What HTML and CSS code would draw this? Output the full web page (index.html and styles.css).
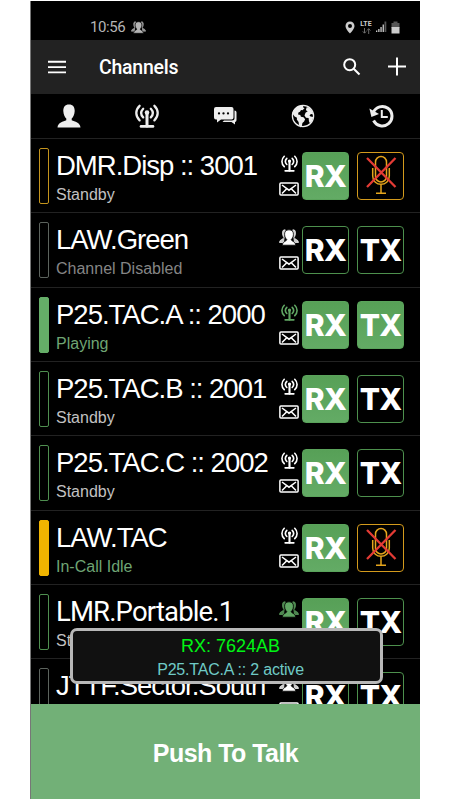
FILE: index.html
```html
<!DOCTYPE html>
<html lang="en">
<head>
<meta charset="utf-8">
<title>Channels</title>
<link rel="stylesheet" href="styles.css">
</head>
<body>
<svg class="sprite" aria-hidden="true">
  <symbol id="tower" viewBox="0 0 24 24">
    <g fill="none" stroke="currentColor" stroke-width="2.300" stroke-linecap="round">
      <path d="M4.600 1.800C.2 6 .2 12.200 4.600 16.400M8.200 4.800C5.600 7.600 5.600 10.800 8.200 13.400M19.400 1.800c4.400 4.200 4.400 10.400 0 14.600M15.800 4.800c2.600 2.800 2.600 6 0 8.600"/>
      <path d="M12 9v13" stroke-width="3"/><path d="M6 22.400h12" stroke-width="2.600"/>
    </g>
    <circle cx="12" cy="8.500" r="2.300" fill="currentColor"/>
  </symbol>
  <symbol id="mail" viewBox="0 0 20 14">
    <g fill="none" stroke="currentColor"><rect x=".9" y=".9" width="18.200" height="12.200" rx="1" stroke-width="1.500"/><path d="M3 3l7 5.200L17 3M3 11.500l4.500-4.600M17 11.500l-4.500-4.600" stroke-width="1.500"/></g>
  </symbol>
  <symbol id="group" viewBox="0 0 20 17">
    <path d="M6.500 1C4 .2 3.200 2.500 3.600 5c.2 2 .9 2.800 1.300 3.500C4.800 10.500.6 10 .5 13.500H5M13.500 1c2.500-.8 3.300 1.500 2.900 4-.2 2-.9 2.800-1.300 3.500.1 2 4.300 1.500 4.400 5H15" fill="currentColor" fill-opacity=".8" stroke="currentColor" stroke-width=".7"/>
    <path class="cutout" d="M10 .8c3.300 0 4.700 2.200 4.400 5-.2 2.400-1.100 3.600-2.200 4.800 0 1.700 4.300 1.700 4.500 5.600H3.300c.2-3.900 4.500-3.900 4.500-5.600C6.700 9.400 5.800 8.200 5.600 5.800 5.300 3 6.700.8 10 .8z"/>
  </symbol>
  <symbol id="mic" viewBox="0 0 32 40">
    <g fill="none" stroke="#e5a51c" stroke-width="1.500"><rect x="10.500" y="1.500" width="11" height="25.500" rx="5.500"/><path d="M7.700 13v8c0 11 16.600 11 16.600 0v-8M16 29.500v8.500M11 38.300h10"/></g>
    <path d="M2 3l28.500 29M30.500 3L2 32" stroke="#e33b35" stroke-width="2.300"/>
  </symbol>
</svg>
<main class="phone">
  <header class="status">
    <span class="clock">10:56</span>
    <svg class="status-group"><use href="#group"/></svg>
    <div class="status-right">
      <svg width="10" height="13" viewBox="0 0 10 13"><path fill="#ccc" fill-rule="evenodd" d="M5 .5C2.300.5.500 2.500.500 5c0 3 4.500 7.500 4.500 7.500S9.500 8 9.500 5C9.500 2.500 7.700.5 5 .5zM5 3a2 2 0 1 1 0 4 2 2 0 0 1 0-4z"/></svg>
      <div class="network"><span class="lte">LTE</span><svg width="9" height="6" viewBox="0 0 9 6"><path d="M2.500 0v5M.8 3.400l1.700 1.800 1.700-1.800M6.700 6V.8M5 2.500L6.700.7l1.700 1.800" stroke="#777" fill="none" stroke-width=".9"/></svg></div>
      <svg class="signal" width="11" height="12" viewBox="0 0 11 12"><path fill="#ccc" d="M0 9.500h1.300V11H0zM2.200 8h1.300v3H2.200zM4.400 6h1.300v5H4.400zM6.600 3.500h1.300V11H6.600z"/><path fill="#555" d="M8.500.5h1.800V11H8.500z"/></svg>
      <svg width="9" height="13" viewBox="0 0 9 13"><path fill="#555" d="M2.500.5h4V2H8.500v5h-8V2h2z"/><path fill="#ccc" d="M.5 6h8v6.500h-8z"/></svg>
    </div>
  </header>
  <div class="appbar">
    <svg width="18" height="14" viewBox="0 0 18 14"><path d="M0 1.700h18M0 7.100h18M0 12.400h18" stroke="#fff" stroke-width="1.900"/></svg>
    <h1>Channels</h1>
    <svg class="search" width="18" height="18" viewBox="0 0 18 18"><g fill="none" stroke="#fff" stroke-width="2"><circle cx="6.700" cy="6.700" r="5.500"/><path d="M10.700 10.700l5.800 5.800"/></g></svg>
    <svg width="18" height="19" viewBox="0 0 18 19"><path d="M9 .4v18.200M0 9.500h18" stroke="#fff" stroke-width="2"/></svg>
  </div>
  <nav class="tabs">
    <svg width="24" height="24" viewBox="0 0 24 24"><path fill="#eee" d="M12 .5c4 0 5.800 2.700 5.700 6.500-.1 3.500-1.700 6.500-3 7.600v1.600c3 1.500 8.500 2 8.800 7.300H.5c.3-5.300 5.800-5.800 8.800-7.300v-1.600C8 13.500 6.400 10.500 6.300 7 6.200 3.200 8 .5 12 .5z"/></svg>
    <svg width="24" height="24"><use href="#tower"/></svg>
    <svg width="24" height="24" viewBox="0 0 24 24"><path fill="#eee" d="M3 3h15.500a2 2 0 0 1 2 2v8.500a2 2 0 0 1-2 2H8l-4 3v-3H3a2 2 0 0 1-2-2V5a2 2 0 0 1 2-2z"/><path fill="#eee" d="M21.500 6.500c1.200 0 2 .8 2 2v7.500c0 1.200-.8 2-1.500 2v2.500L18.500 18H9.500l1.500-1.500h8c1.500 0 2.500-.8 2.500-2z"/><path d="M6 9.400h0M10.500 9.400h0M15 9.400h0" stroke="#000" stroke-width="2.300" stroke-linecap="round"/></svg>
    <svg width="24" height="24" viewBox="0 0 24 24"><circle cx="12" cy="12" r="10.600" fill="#000" stroke="#eee" stroke-width="1.300"/><path fill="#eee" d="M8 2l4.500-.8-.5 2 1.500 1-2 2-1.500-.2-1 1.800-1.600.6-.3 2 2.200.6.6 1.800 2.600.5 1.600 2-1 2.200-1.700 1.500-.5 2.800-1.200 1.600-1.700-2.500-.4-3-1.800-2.300.2-1.800-2.400-1.300L1.200 9C2.300 5.500 5 3 8 2zM15.800 3l3 1.300 2.500 3 .8 3-2.200-.4-1.400 1.500 1 1.200 2.800.4-1 3.500-2.300 3-1-2-.4-3.500-2.600-.3-1.500-2.300 1-2.700 2.200-1.400-1.800-1 .4-1.700z"/></svg>
    <svg width="25" height="24" viewBox="0 0 25 24"><path d="M4.300 8.500a9.700 9.700 0 1 1 .3 8" fill="none" stroke="#eee" stroke-width="3"/><path d="M.4 4.500l2 8.500L10 10z" fill="#eee"/><path d="M12.800 6v7h6" fill="none" stroke="#eee" stroke-width="2"/></svg>
  </nav>
  <section class="channels">
    <article class="row">
      <i class="bar amber"></i>
      <div class="info"><h2>DMR.Disp :: 3001</h2><p>Standby</p></div>
      <div class="kinds"><svg class="kind"><use href="#tower"/></svg><svg class="mail"><use href="#mail"/></svg></div>
      <div class="key on">RX</div><div class="key muted"><svg><use href="#mic"/></svg></div>
    </article>
    <article class="row">
      <i class="bar gray"></i>
      <div class="info"><h2>LAW.Green</h2><p class="disabled">Channel Disabled</p></div>
      <div class="kinds"><svg class="kind people"><use href="#group"/></svg><svg class="mail"><use href="#mail"/></svg></div>
      <div class="key">RX</div><div class="key">TX</div>
    </article>
    <article class="row">
      <i class="bar green full"></i>
      <div class="info"><h2>P25.TAC.A :: 2000</h2><p class="active">Playing</p></div>
      <div class="kinds"><svg class="kind live"><use href="#tower"/></svg><svg class="mail"><use href="#mail"/></svg></div>
      <div class="key on">RX</div><div class="key on">TX</div>
    </article>
    <article class="row">
      <i class="bar green"></i>
      <div class="info"><h2>P25.TAC.B :: 2001</h2><p>Standby</p></div>
      <div class="kinds"><svg class="kind"><use href="#tower"/></svg><svg class="mail"><use href="#mail"/></svg></div>
      <div class="key on">RX</div><div class="key">TX</div>
    </article>
    <article class="row">
      <i class="bar green"></i>
      <div class="info"><h2>P25.TAC.C :: 2002</h2><p>Standby</p></div>
      <div class="kinds"><svg class="kind"><use href="#tower"/></svg><svg class="mail"><use href="#mail"/></svg></div>
      <div class="key on">RX</div><div class="key">TX</div>
    </article>
    <article class="row">
      <i class="bar amber full"></i>
      <div class="info"><h2>LAW.TAC</h2><p class="active">In-Call Idle</p></div>
      <div class="kinds"><svg class="kind"><use href="#tower"/></svg><svg class="mail"><use href="#mail"/></svg></div>
      <div class="key on">RX</div><div class="key muted"><svg><use href="#mic"/></svg></div>
    </article>
    <article class="row">
      <i class="bar green"></i>
      <div class="info"><h2 class="portable">LMR.Portable.1</h2><p>Standby</p></div>
      <div class="kinds"><svg class="kind people live"><use href="#group"/></svg><svg class="mail"><use href="#mail"/></svg></div>
      <div class="key on">RX</div><div class="key">TX</div>
    </article>
    <article class="row">
      <i class="bar gray"></i>
      <div class="info"><h2>JTTF.Sector.South</h2></div>
      <div class="kinds"><svg class="kind people"><use href="#group"/></svg><svg class="mail"><use href="#mail"/></svg></div>
      <div class="key">RX</div><div class="key">TX</div>
    </article>
  </section>
  <button class="ptt">Push To Talk</button>
  <div class="toast"><div class="toast-rx">RX: 7624AB</div><div class="toast-channel">P25.TAC.A :: 2 active</div></div>
</main>
</body>
</html>
```
FILE: styles.css
```css
* { box-sizing: border-box; }
body { margin: 0; background: #fff; font-family: "Liberation Sans", Arial, sans-serif; }
.sprite { position: absolute; width: 0; height: 0; }
svg { display: block; flex: none; }
.phone { position: relative; width: 390px; height: 798px; margin: 1px 0 1px 30px; background: #000; color: #fff; display: flex; flex-direction: column; border-left: 1px solid #777; }
.status { height: 39px; flex: none; display: flex; align-items: center; padding: 13px 20px 0 59px; color: #b5b5b5; }
.clock { font: 15px/18px Roboto, sans-serif; width: 36px; letter-spacing: -.4px; }
.status-group { width: 15px; height: 13px; margin-left: 5px; }
.status-right { margin-left: auto; display: flex; align-items: center; gap: 4px; }
.status-right > :first-child { margin-right: 1px; }
.network { width: 12px; display: flex; flex-direction: column; align-items: center; }
.lte { font: bold 7px/7px Roboto, sans-serif; color: #ccc; }
.appbar { height: 54px; flex: none; background: #222; display: flex; align-items: center; padding: 0 14px 1px 17px; }
.appbar h1 { margin: 3px 0 0 33px; font: 500 19.500px/24px Roboto, sans-serif; letter-spacing: -.25px; }
.search { margin: 0 27px 0 auto; }
.tabs { height: 45px; flex: none; display: flex; justify-content: space-between; padding: 10px 26px 0 26px; color: #eee; border-bottom: 1px solid #222; }
.channels { height: 565px; flex: none; overflow: hidden; }
.row { height: 74.350px; display: flex; align-items: flex-start; padding: 9px 15px 0 8px; border-bottom: 1px solid #222; }
.bar { width: 10px; height: 56px; border: 1.500px solid; border-radius: 2px; flex: none; }
.green { color: #4f8f50; } .green.full { color: #65ae68; background: #65ae68; }
.amber { color: #c4941c; } .amber.full { color: #f0b400; background: #f0b400; }
.gray { color: #5c635d; }
.info { width: 230px; margin-left: 7px; white-space: nowrap; }
h2 { margin: 1px 0 0; font-size: 27.500px; line-height: 34px; font-weight: 400; letter-spacing: -1px; }
.portable { font-family: Roboto, sans-serif; letter-spacing: -.85px; }
.info p { margin: 2px 0 0; font-size: 16px; line-height: 20px; color: #c2c2c2; }
.info p.active { color: #6fa574; } .info p.disabled { color: #858585; }
.kinds { width: 20px; margin-left: -7px; margin-right: 3px; display: flex; flex-direction: column; align-items: center; gap: 10px; padding-top: 7px; position: relative; }
.kind { width: 17px; height: 17px; }
.people { width: 20px; height: 17px; }
.live { color: #60a663; }
.mail { width: 20px; height: 14px; }
.cutout { fill: currentColor; stroke: #000; stroke-width: .8px; }
.key { width: 47px; height: 48px; margin-top: 4px; border: 1px solid #4d904d; border-radius: 4px; flex: none; display: flex; justify-content: center; align-items: center; font: 800 30px/46px Inter, sans-serif; letter-spacing: -.7px; }
.key + .key { margin-left: 8px; }
.on { background: linear-gradient(#57a057, #63ab65); border-color: #5aa35b; }
.muted { border-color: #d39a1c; }
.muted svg { width: 32px; height: 40px; margin-top: -2px; }
.ptt { flex: 1; width: 100%; padding: 2px 0 0; border: 0; background: #72b077; color: #fff; font: bold 25px/30px "Liberation Sans", Arial, sans-serif; letter-spacing: -.55px; }
.toast { position: absolute; left: 39px; top: 627px; width: 313px; height: 56px; padding-top: 3px; background: #111; border: 3px solid #b8b8b8; border-radius: 7px; text-align: center; }
.toast-rx { font-size: 18px; line-height: 24px; color: #00f514; letter-spacing: 0; margin-left: 8px; }
.toast-channel { font-size: 16px; line-height: 23px; color: #6fcac6; letter-spacing: -.2px; margin-left: 8px; }
```
